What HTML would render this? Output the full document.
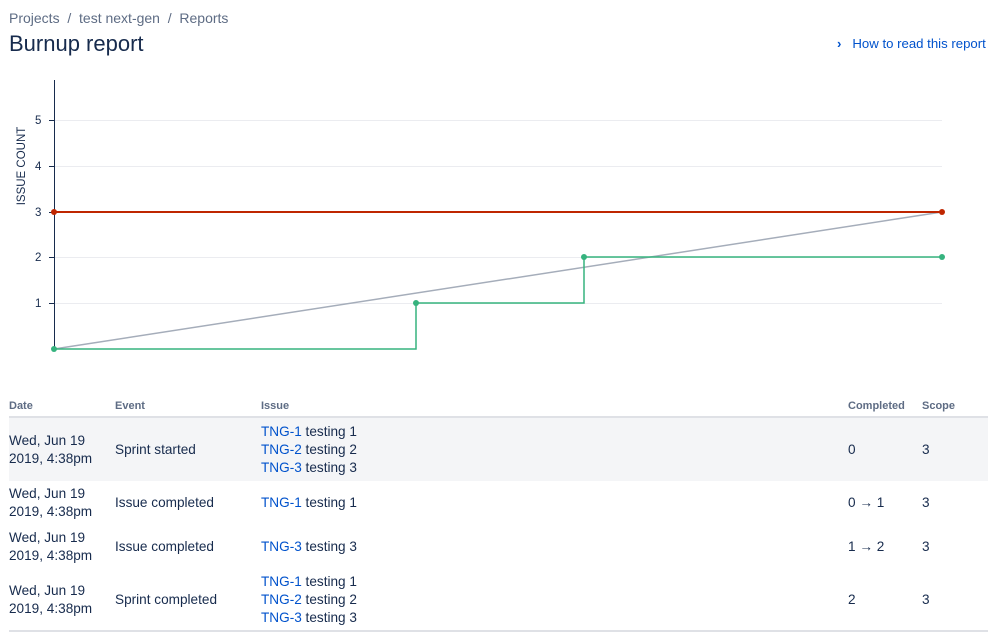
<!DOCTYPE html>
<html><head><meta charset="utf-8"><style>
body{margin:0;width:999px;height:633px;background:#fff;font-family:"Liberation Sans",sans-serif;color:#172b4d;position:relative;overflow:hidden}
.a{position:absolute;white-space:nowrap}
.bc{top:10px;left:9px;font-size:14px;color:#5e6c84}
h1{position:absolute;top:31px;left:9px;margin:0;font-size:22px;font-weight:normal;color:#172b4d}
.how{top:36px;left:837px;font-size:13.2px;color:#0052cc}
.th{font-size:11px;font-weight:bold;color:#5e6c84;top:400px}
.t{font-size:13.6px;line-height:18px}
a{color:#0052cc;text-decoration:none}
</style></head><body>
<div class="a bc">Projects &nbsp;/&nbsp; test next-gen &nbsp;/&nbsp; Reports</div>
<h1>Burnup report</h1>
<div class="a how"><b>›</b>&nbsp;&nbsp; How to read this report</div>
<svg class="a" style="left:0;top:0" width="999" height="390">
<g stroke="#ebecf0" stroke-width="1">
<line x1="54" y1="120.5" x2="942" y2="120.5"/><line x1="54" y1="166.5" x2="942" y2="166.5"/><line x1="54" y1="257.5" x2="942" y2="257.5"/><line x1="54" y1="303.5" x2="942" y2="303.5"/>
</g>
<g stroke="#172b4d"><line x1="54.5" y1="80" x2="54.5" y2="349"/>
<line x1="49" y1="120.5" x2="54" y2="120.5"/><line x1="49" y1="166.5" x2="54" y2="166.5"/><line x1="49" y1="212.5" x2="54" y2="212.5"/><line x1="49" y1="257.5" x2="54" y2="257.5"/><line x1="49" y1="303.5" x2="54" y2="303.5"/></g>
<g font-size="11.5" fill="#172b4d" font-family="Liberation Sans">
<text x="35" y="124">5</text><text x="35" y="170">4</text><text x="35" y="216">3</text><text x="35" y="261">2</text><text x="35" y="307">1</text>
<text transform="translate(25,166) rotate(-90)" text-anchor="middle">ISSUE COUNT</text></g>
<line x1="54" y1="349" x2="942" y2="212" stroke="#a5adba" stroke-width="1.5"/>
<line x1="54" y1="212" x2="942" y2="212" stroke="#bf2600" stroke-width="2"/>
<polyline points="54,349 416,349 416,303 584,303 584,257 942,257" fill="none" stroke="#36b37e" stroke-width="1.5"/>
<g fill="#36b37e"><circle cx="54" cy="349" r="3"/><circle cx="416" cy="303" r="3"/><circle cx="584" cy="257" r="3"/><circle cx="942" cy="257" r="3"/></g>
<g fill="#bf2600"><circle cx="54" cy="212" r="3"/><circle cx="942" cy="212" r="3"/></g>
</svg>
<div class="a th" style="left:9px">Date</div><div class="a th" style="left:115px">Event</div><div class="a th" style="left:261px">Issue</div><div class="a th" style="left:848px">Completed</div><div class="a th" style="left:922px">Scope</div>
<div class="a" style="left:9px;top:416px;width:979px;height:2px;background:#dfe1e6"></div>
<div class="a" style="left:9px;top:418px;width:979px;height:63px;background:#f4f5f7"></div>
<div class="a" style="left:9px;top:630px;width:979px;height:2px;background:#dfe1e6"></div>

<div class="a t" style="left:9px;top:432px">Wed, Jun 19<br>2019, 4:38pm</div>
<div class="a t" style="left:115px;top:441px">Sprint started</div>
<div class="a t" style="left:261px;top:423px"><a>TNG-1</a> testing 1<br><a>TNG-2</a> testing 2<br><a>TNG-3</a> testing 3</div>
<div class="a t" style="left:848px;top:441px">0</div><div class="a t" style="left:922px;top:441px">3</div>

<div class="a t" style="left:9px;top:485px">Wed, Jun 19<br>2019, 4:38pm</div>
<div class="a t" style="left:115px;top:494px">Issue completed</div>
<div class="a t" style="left:261px;top:494px"><a>TNG-1</a> testing 1</div>
<div class="a t" style="left:848px;top:494px">0 → 1</div><div class="a t" style="left:922px;top:494px">3</div>

<div class="a t" style="left:9px;top:529px">Wed, Jun 19<br>2019, 4:38pm</div>
<div class="a t" style="left:115px;top:538px">Issue completed</div>
<div class="a t" style="left:261px;top:538px"><a>TNG-3</a> testing 3</div>
<div class="a t" style="left:848px;top:538px">1 → 2</div><div class="a t" style="left:922px;top:538px">3</div>

<div class="a t" style="left:9px;top:582px">Wed, Jun 19<br>2019, 4:38pm</div>
<div class="a t" style="left:115px;top:591px">Sprint completed</div>
<div class="a t" style="left:261px;top:573px"><a>TNG-1</a> testing 1<br><a>TNG-2</a> testing 2<br><a>TNG-3</a> testing 3</div>
<div class="a t" style="left:848px;top:591px">2</div><div class="a t" style="left:922px;top:591px">3</div>
</body></html>
